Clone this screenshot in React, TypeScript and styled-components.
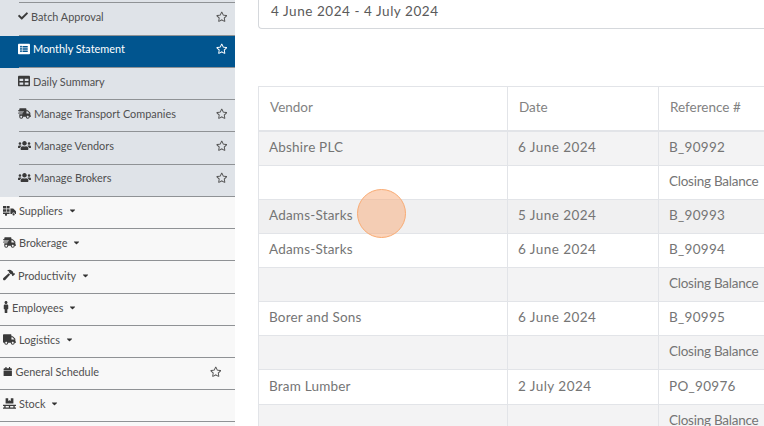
import React from 'react'
import styled, {createGlobalStyle} from 'styled-components'
import {
	FaCalendar, FaCaretDown, FaCheck, FaHammer, FaListAlt, FaMale, FaPallet,
	FaRegStar, FaShippingFast, FaTable, FaTruck, FaUsers
} from 'react-icons/fa'

const GlobalStyle = createGlobalStyle`
	html, body {
		margin: 0;
		padding: 0;
		height: 100%;
		background: #fff;
		overflow: hidden;
	}
	body {
		font-family: Lato, "Open Sans", sans-serif;
		color: #555;
	}
`

const Page = styled.div`
	display: flex;
	width: 764px;
	height: 426px;
	overflow: hidden;
`

const Sidebar = styled.nav`
	width: 235px;
	flex: none;
	margin-top: -29px;
	background: #f8f8f8;
`

const SubList = styled.div`
	background: #dfe3e8;
`

const SubRow = styled.div<{$active?: boolean}>`
	position: relative;
	display: flex;
	align-items: center;
	height: 32.3px;
	box-sizing: border-box;
	padding: 0 8px 6px 18px;
	font-size: 10.9px;
	color: ${props => props.$active ? '#fff' : '#505050'};
	background: ${props => props.$active ? '#01558f' : 'transparent'};

	&::after {
		content: '';
		position: absolute;
		left: 19px;
		right: 0;
		bottom: 0;
		height: 1px;
		background: #8f9295;
	}
`

const TopRow = styled.div`
	display: flex;
	align-items: center;
	height: 32.2px;
	box-sizing: border-box;
	padding: 0 14px 4px 3px;
	border-bottom: 1px solid #8f9295;
	font-size: 10.9px;
	color: #505050;
`

const Label = styled.span`
	flex: 1;
	white-space: nowrap;
`

const TopLabel = styled.span`
	white-space: nowrap;
`

const Caret = styled(FaCaretDown)`
	font-size: 9px;
	margin-left: 5px;
	color: #333;
`

const Star = styled(FaRegStar)<{$active?: boolean}>`
	font-size: 11.5px;
	color: ${props => props.$active ? '#fff' : '#555'};
	flex: none;
`

const TopStar = styled(Star)`
	margin-left: auto;
`

const IconSlot = styled.span<{$active?: boolean}>`
	display: inline-flex;
	align-items: center;
	margin-right: 3px;
	color: ${props => props.$active ? '#fff' : '#3a3a3a'};
`

const MaleIcon = styled(FaMale)`
	width: 6px;
	height: 12px;
`

const Main = styled.main`
	flex: 1;
	min-width: 0;
	padding-left: 23px;
`

const DateBox = styled.div`
	height: 29px;
	box-sizing: border-box;
	padding: 0 0 7px 12px;
	display: flex;
	align-items: center;
	border: 1px solid #d5d8dc;
	border-top: none;
	border-right: none;
	border-radius: 0 0 0 4px;
	font-size: 13.5px;
	letter-spacing: 0.55px;
	color: #5a5a5a;
`

const Table = styled.table`
	margin-top: 57px;
	width: 620px;
	table-layout: fixed;
	border-collapse: collapse;
	font-size: 13.5px;
	color: #757575;
`

const HeadCell = styled.th`
	height: 44.5px;
	padding: 0 11px 3px;
	box-sizing: border-box;
	border: 1px solid #e2e4e8;
	border-bottom-width: 2px;
	text-align: left;
	font-weight: 400;
	color: #828282;
	background: #fff;
`

const BodyRow = styled.tr<{$tone: string}>`
	background: ${props => props.$tone};
`

const Cell = styled.td<{$spacing?: number}>`
	height: 34.15px;
	padding: 0 10px 3px;
	box-sizing: border-box;
	border: 1px solid #e2e4e8;
	white-space: nowrap;
	letter-spacing: ${props => props.$spacing ?? 0}px;
`

const Cursor = styled.div`
	position: absolute;
	left: 357px;
	top: 189px;
	width: 47px;
	height: 47px;
	border-radius: 50%;
	border: 1.5px solid #f9ab73;
	background: rgba(248, 170, 120, 0.5);
`

const SupplierTruck = () => (
	<svg width="13" height="10" viewBox="0 0 13 10" fill="#3a3a3a">
		<path d="M0 0h3v2.6H0zM3.6 0h3v2.6h-3zM0 3.2h3v2.6H0zM3.6 3.2h3v2.6h-3zM0 6.4h6.6V8H0z"/>
		<path d="M7.4 2.4h2.8L13 5.2V8h-1a1.4 1.4 0 0 0-2.8 0H7.4z"/>
		<circle cx="10.6" cy="8.4" r="1.1"/>
		<circle cx="3" cy="8.8" r="1.1"/>
	</svg>
)

const subItems = [
	{icon: <FaCheck size={10}/>, label: 'Batch Approval', star: true},
	{icon: <FaListAlt size={12}/>, label: 'Monthly Statement', star: true, active: true},
	{icon: <FaTable size={12}/>, label: 'Daily Summary'},
	{icon: <FaShippingFast size={13}/>, label: 'Manage Transport Companies', star: true},
	{icon: <FaUsers size={13}/>, label: 'Manage Vendors', star: true},
	{icon: <FaUsers size={13}/>, label: 'Manage Brokers', star: true}
]

const topItems = [
	{icon: <SupplierTruck/>, label: 'Suppliers', caret: true},
	{icon: <FaShippingFast size={13}/>, label: 'Brokerage', caret: true},
	{icon: <FaHammer size={12}/>, label: 'Productivity', caret: true},
	{icon: <MaleIcon/>, label: 'Employees', caret: true},
	{icon: <FaTruck size={13}/>, label: 'Logistics', caret: true},
	{icon: <FaCalendar size={9.5}/>, label: 'General Schedule', star: true},
	{icon: <FaPallet size={13}/>, label: 'Stock', caret: true}
]

const rows = [
	{vendor: 'Abshire PLC', date: '6 June 2024', ref: 'B_90992', tone: '#f3f3f4'},
	{vendor: '', date: '', ref: 'Closing Balance', tone: '#ffffff'},
	{vendor: 'Adams-Starks', date: '5 June 2024', ref: 'B_90993', tone: '#f0f0f1'},
	{vendor: 'Adams-Starks', date: '6 June 2024', ref: 'B_90994', tone: '#ffffff'},
	{vendor: '', date: '', ref: 'Closing Balance', tone: '#f3f3f4'},
	{vendor: 'Borer and Sons', date: '6 June 2024', ref: 'B_90995', tone: '#ffffff'},
	{vendor: '', date: '', ref: 'Closing Balance', tone: '#f3f3f4'},
	{vendor: 'Bram Lumber', date: '2 July 2024', ref: 'PO_90976', tone: '#ffffff'},
	{vendor: '', date: '', ref: 'Closing Balance', tone: '#f3f3f4'}
]

const App = () => {
	return (
		<Page>
			<GlobalStyle/>
			<Sidebar>
				<SubList>
					<SubRow/>
					{subItems.map(item => (
						<SubRow key={item.label} $active={item.active}>
							<IconSlot $active={item.active}>{item.icon}</IconSlot>
							<Label>{item.label}</Label>
							{item.star && <Star $active={item.active}/>}
						</SubRow>
					))}
				</SubList>
				{topItems.map(item => (
					<TopRow key={item.label}>
						<IconSlot>{item.icon}</IconSlot>
						<TopLabel>{item.label}</TopLabel>
						{item.caret && <Caret/>}
						{item.star && <TopStar/>}
					</TopRow>
				))}
			</Sidebar>
			<Main>
				<DateBox>4 June 2024 - 4 July 2024</DateBox>
				<Table>
					<colgroup>
						<col width="249"/>
						<col width="151"/>
						<col width="220"/>
					</colgroup>
					<thead>
						<tr>
							<HeadCell>Vendor</HeadCell>
							<HeadCell>Date</HeadCell>
							<HeadCell>Reference #</HeadCell>
						</tr>
					</thead>
					<tbody>
						{rows.map((row, index) => (
							<BodyRow key={index} $tone={row.tone}>
								<Cell $spacing={0.2}>{row.vendor}</Cell>
								<Cell $spacing={0.45}>{row.date}</Cell>
								<Cell $spacing={row.vendor ? 0.3 : -0.25}>{row.ref}</Cell>
							</BodyRow>
						))}
					</tbody>
				</Table>
			</Main>
			<Cursor/>
		</Page>
	)
}

export default App
